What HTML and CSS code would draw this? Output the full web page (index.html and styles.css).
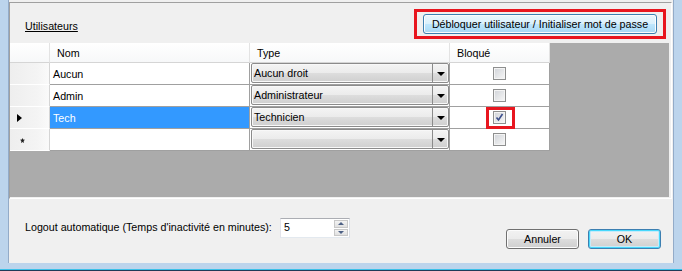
FILE: index.html
```html
<!DOCTYPE html>
<html lang="fr">
<head>
  <meta charset="UTF-8" />
  <title>Utilisateurs</title>
  <link rel="stylesheet" href="styles.css">
</head>
<body>
  <div class="window">
    <div class="client">
      <div class="panel">
        <div class="panel-top">
          <a class="link-label" href="#">Utilisateurs</a>
          <div class="mark-button">
            <button class="btn btn-hot">Débloquer utilisateur / Initialiser mot de passe</button>
          </div>
        </div>

        <div class="grid-area">
          <div class="grid">
            <div class="hcell corner"></div>
            <div class="hcell">Nom</div>
            <div class="hcell">Type</div>
            <div class="hcell">Bloqué</div>

            <div class="rhead"></div>
            <div class="cell">Aucun</div>
            <div class="cell cell-combo"><div class="combo"><span class="combo-text">Aucun droit</span><span class="combo-btn"><i class="arrow-down"></i></span></div></div>
            <div class="cell cell-check"><span class="check"></span></div>

            <div class="rhead"></div>
            <div class="cell">Admin</div>
            <div class="cell cell-combo"><div class="combo"><span class="combo-text">Administrateur</span><span class="combo-btn"><i class="arrow-down"></i></span></div></div>
            <div class="cell cell-check"><span class="check"></span></div>

            <div class="rhead"><i class="arrow-right"></i></div>
            <div class="cell selected">Tech</div>
            <div class="cell cell-combo"><div class="combo"><span class="combo-text">Technicien</span><span class="combo-btn"><i class="arrow-down"></i></span></div></div>
            <div class="cell cell-check">
              <span class="check">
                <svg width="9" height="9" viewBox="0 0 9 9"><path d="M1.5 4.5 L3.5 7 L7.5 1" fill="none" stroke="#3c4f8c" stroke-width="1.6"/></svg>
              </span>
              <span class="mark-check"></span>
            </div>

            <div class="rhead"><svg class="star" width="5" height="5" viewBox="0 0 5 5"><path d="M2.5 0 L3.2 1.6 L5 1.8 L3.6 3 L4 5 L2.5 4 L1 5 L1.4 3 L0 1.8 L1.8 1.6 Z" fill="#222"/></svg></div>
            <div class="cell"></div>
            <div class="cell cell-combo"><div class="combo"><span class="combo-text"></span><span class="combo-btn"><i class="arrow-down"></i></span></div></div>
            <div class="cell cell-check"><span class="check"></span></div>
          </div>
        </div>
      </div>

      <div class="bottom">
        <span class="logout-label">Logout automatique (Temps d'inactivité en minutes):</span>
        <div class="numeric">
          <span class="numeric-value">5</span>
          <span class="spin">
            <span class="spin-btn"><i class="spin-up"></i></span>
            <span class="spin-btn"><i class="spin-down"></i></span>
          </span>
        </div>
        <div class="actions">
          <button class="btn">Annuler</button>
          <button class="btn btn-default">OK</button>
        </div>
      </div>
    </div>
    <div class="frame-bottom"></div>
  </div>
</body>
</html>
```

FILE: styles.css
```css
body {
  margin: 0;
  font-family: 'Liberation Sans', Arial, sans-serif;
  font-size: 10.7px;
  color: #000;
}

.window {
  width: 682px;
  height: 271px;
  background-color: #bcd4ec;
  display: flex;
  flex-direction: column;
  overflow: hidden;
}

.client {
  margin: 0 8px;
  height: 263px;
  box-sizing: border-box;
  background-color: #f0f0f0;
  border-left: 1px solid #93abc8;
  border-right: 1px solid #93abc8;
  display: flex;
  flex-direction: column;
}

.frame-bottom {
  height: 8px;
  box-sizing: border-box;
  border-bottom: 1px solid #1f3b57;
  box-shadow: inset 0 -1px 0 #3cc0e8;
}

/* Users panel */
.panel {
  margin: 2px 1px 0 0;
  border: 1px solid;
  border-color: #a0a0a0 #ffffff #ffffff #a0a0a0;
  padding: 0 2px 1px 0;
}

.panel-top {
  height: 40px;
  display: flex;
  justify-content: space-between;
  align-items: flex-start;
}

.link-label {
  margin: 17px 0 0 15px;
  color: #000;
  text-decoration: underline;
}

.mark-button {
  margin: 6px 3px 0 0;
  border: 3px solid #e8161f;
  padding: 2px 6px;
  display: flex;
}

.btn {
  font-family: inherit;
  font-size: 10.7px;
  color: #000;
  height: 20px;
  padding: 0 4px;
  white-space: nowrap;
  border: 1px solid #707070;
  border-radius: 3px;
  background: linear-gradient(#f2f2f2 0%, #ebebeb 50%, #dddddd 51%, #cfcfcf 100%);
  box-shadow: inset 0 0 0 1px #fcfcfc;
}

.btn-hot {
  width: 234px;
  border-color: #3c7fb1;
  background: linear-gradient(#eaf6fd 0%, #d9f0fc 50%, #bee6fd 51%, #a7d9f5 100%);
}

.btn-default {
  border-color: #3c7fb1;
  box-shadow: inset 0 0 0 1px #48d8fb, inset 0 0 0 2px #c6ebfa;
}

/* Data grid */
.grid-area {
  height: 154px;
  background-color: #ababab;
}

.grid {
  display: grid;
  grid-template-columns: 40px 200px 200px 100px;
  grid-template-rows: 20px repeat(4, 22px);
  width: 540px;
}

.hcell {
  box-sizing: border-box;
  padding-left: 7px;
  display: flex;
  align-items: center;
  background: linear-gradient(#ffffff, #f7f8f9);
  border-right: 1px solid #e3e3e3;
  border-bottom: 1px solid #d5d5d5;
}

.hcell.corner {
  padding: 0;
}

.rhead {
  box-sizing: border-box;
  display: flex;
  align-items: center;
  padding-left: 7px;
  background: linear-gradient(to right, #eeeeee, #f4f4f4 70%, #fafafa);
  border-right: 1px solid #d5d5d5;
  border-bottom: 1px solid #ffffff;
}

.arrow-right {
  width: 0;
  height: 0;
  border-left: 5px solid #000;
  border-top: 4px solid transparent;
  border-bottom: 4px solid transparent;
}

.star {
  margin-left: 3px;
  margin-top: 1px;
}

.cell {
  box-sizing: border-box;
  display: flex;
  align-items: center;
  padding-left: 3px;
  background-color: #fff;
  border-right: 1px solid #a0a0a0;
  border-bottom: 1px solid #a0a0a0;
}

.cell.selected {
  background-color: #3399ff;
  color: #fff;
}

.cell-combo {
  padding: 0 0 0 1px;
  align-items: flex-start;
}

.combo {
  flex: 1;
  height: 20px;
  box-sizing: border-box;
  display: flex;
  border: 1px solid #8b8b8b;
  border-radius: 2px;
  background: linear-gradient(#f4f4f4 0%, #ebebeb 50%, #dddddd 51%, #cfcfcf 100%);
  box-shadow: inset 0 0 0 1px #f8f8f8;
}

.combo-text {
  flex: 1;
  padding-left: 2px;
  display: flex;
  align-items: center;
}

.combo-btn {
  width: 15px;
  border-left: 1px solid #8b8b8b;
  display: flex;
  align-items: center;
  justify-content: center;
}

.arrow-down {
  width: 0;
  height: 0;
  border-top: 4px solid #000;
  border-left: 4px solid transparent;
  border-right: 4px solid transparent;
  margin-top: 1px;
}

.cell-check {
  position: relative;
  justify-content: center;
  padding: 0;
}

.check {
  width: 13px;
  height: 13px;
  box-sizing: border-box;
  border: 1px solid #8e8f8f;
  background: linear-gradient(135deg, #d0d3d8, #f7f7f7);
  box-shadow: inset 0 0 0 1px #f4f4f4;
  display: flex;
  align-items: center;
  justify-content: center;
}

.mark-check {
  position: absolute;
  left: 36px;
  top: 0;
  width: 29px;
  height: 22px;
  box-sizing: border-box;
  border: 3px solid #e8161f;
}

/* Bottom bar */
.bottom {
  flex: 1;
  display: flex;
  align-items: flex-start;
  padding: 19px 12px 0 16px;
}

.logout-label {
  width: 255px;
  margin-top: 3px;
}

.numeric {
  width: 70px;
  height: 20px;
  box-sizing: border-box;
  display: flex;
  background-color: #fff;
  border: 1px solid;
  border-color: #abadb3 #dbdfe6 #e3e9ef #e2e3ea;
}

.numeric-value {
  flex: 1;
  padding: 2px 0 0 3px;
}

.spin {
  width: 14px;
  display: flex;
  flex-direction: column;
  padding: 1px 1px 1px 0;
  gap: 1px;
}

.spin-btn {
  flex: 1;
  display: flex;
  align-items: center;
  justify-content: center;
  background: linear-gradient(#f3f3f3, #e0e0e0);
  border: 1px solid #c8c8c8;
}

.spin-up {
  border-bottom: 3px solid #4d6185;
  border-left: 3px solid transparent;
  border-right: 3px solid transparent;
}

.spin-down {
  border-top: 3px solid #4d6185;
  border-left: 3px solid transparent;
  border-right: 3px solid transparent;
}

.actions {
  margin-left: auto;
  margin-top: 11px;
  display: flex;
  gap: 9px;
}

.actions .btn {
  width: 73px;
}
```
